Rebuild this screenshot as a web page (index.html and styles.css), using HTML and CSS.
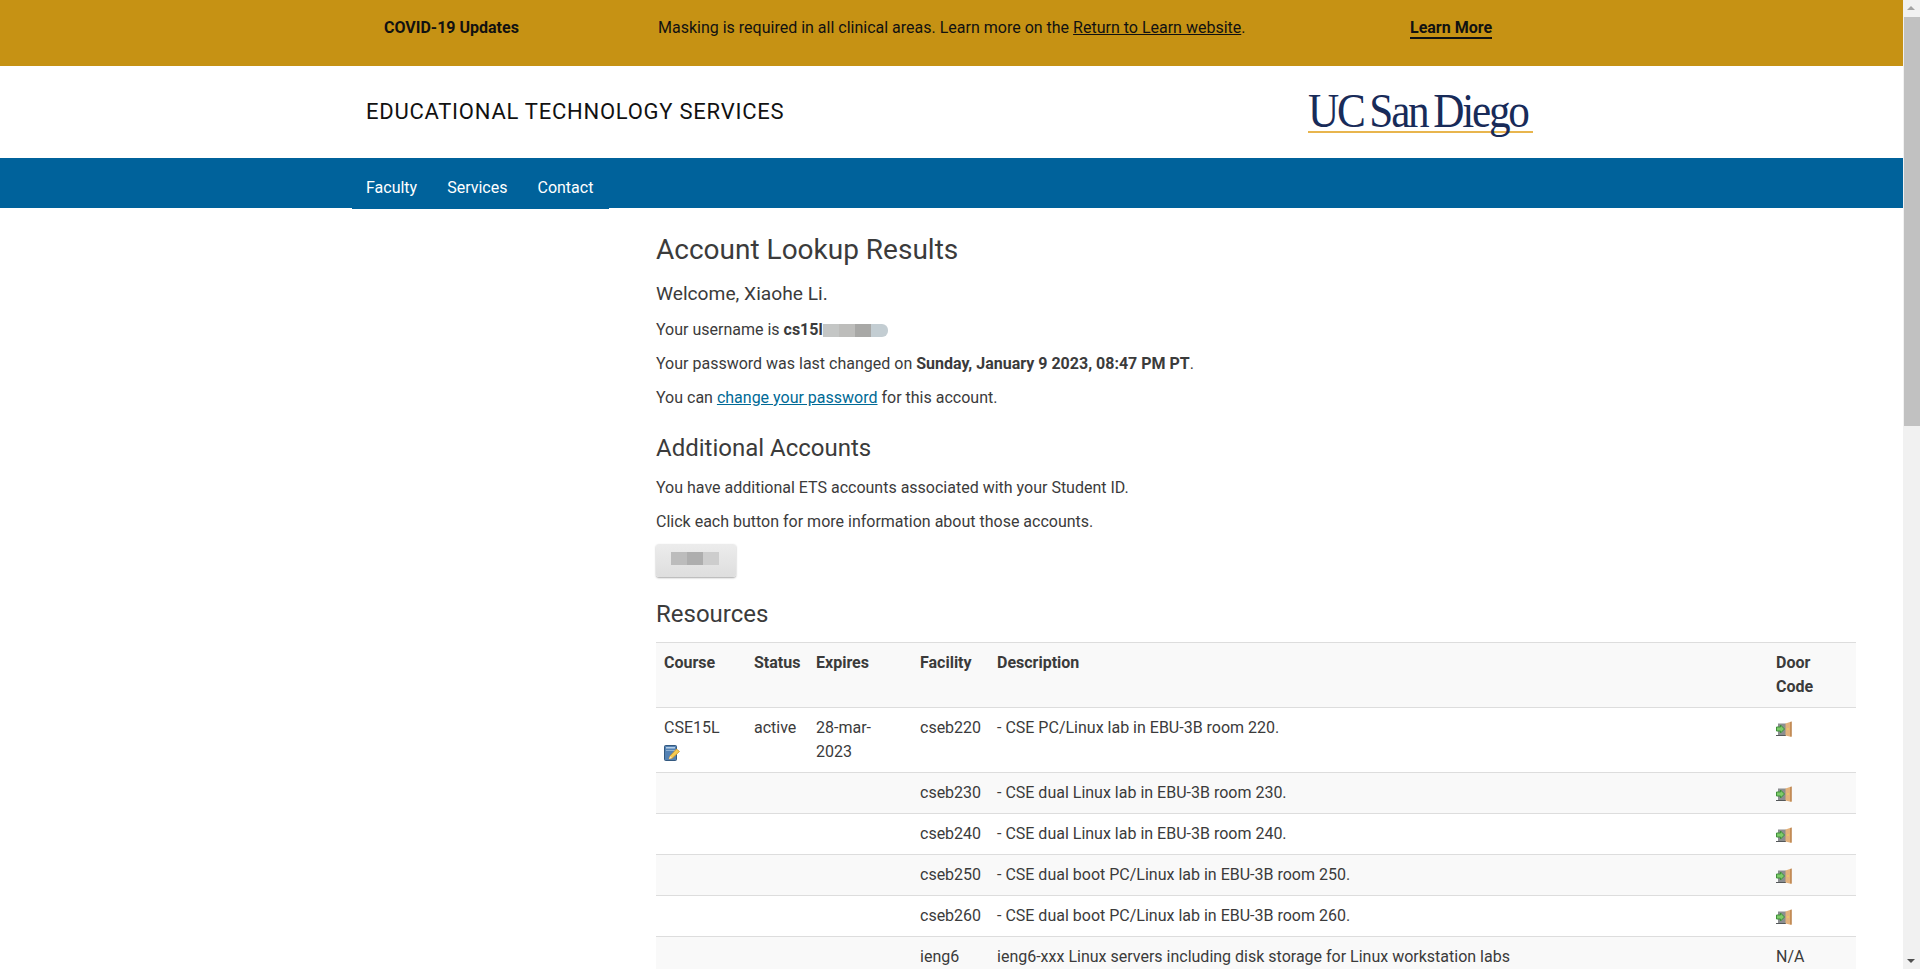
FILE: index.html
```html
<!DOCTYPE html>
<html lang="en">
  <head>
    <meta charset="UTF-8" />
    <meta name="viewport" content="width=device-width, initial-scale=1.0" />
    <title>Account Lookup Results</title>
    <link rel="stylesheet" href="styles.css">
  </head>
  <body>
    <svg class="defs" width="0" height="0">
      <symbol id="door" viewBox="0 0 16 16">
        <rect x="2" y="2.500" width="8" height="12" fill="#8b8e90" />
        <rect x="0" y="14" width="10" height="1" fill="#55585a" />
        <path d="M9.500 2.500 15.500 0.500V16L9.500 14.500Z" fill="#e3b27c" />
        <path d="M14.500 1V15.500H15.500V0.500Z" fill="#a5672e" />
        <rect x="11.500" y="7" width="1" height="2" fill="#f2d35a" />
        <path d="M0.500 6H4.500V4L8.500 8 4.500 12V10H0.500Z" fill="#7ccb68" stroke="#3f8f3a" stroke-width="1" />
      </symbol>
      <symbol id="book" viewBox="0 0 16 16">
        <rect x="0.500" y="0.500" width="12" height="15" rx="1" fill="#5482b4" stroke="#34597f" />
        <rect x="2" y="2" width="9" height="1.500" fill="#b5cee6" />
        <rect x="2" y="5" width="9" height="1" fill="#8fb1d3" />
        <path d="M5 14 6.200 10.800 12.500 4 15.500 6.500 8.500 13Z" fill="#f5cb52" stroke="#d0942a" stroke-width="0.800" />
        <path d="M5 14 6.200 11 8 13Z" fill="#f7e7c2" />
      </symbol>
    </svg>

    <div class="page">
      <div class="main">
        <div class="banner">
          <strong>COVID-19 Updates</strong>
          <span>Masking is required in all clinical areas. Learn more on the <a href="#">Return to Learn website</a>.</span>
          <a class="learn-more" href="#">Learn More</a>
        </div>

        <div class="site-header">
          <div class="site-title">EDUCATIONAL TECHNOLOGY SERVICES</div>
          <div class="logo"><span class="logo-text">UC San Diego</span></div>
        </div>

        <div class="nav">
          <ul class="nav-list">
            <li><a href="#">Faculty</a></li>
            <li><a href="#">Services</a></li>
            <li><a href="#">Contact</a></li>
          </ul>
        </div>

        <div class="content">
          <h1>Account Lookup Results</h1>
          <p class="welcome">Welcome, Xiaohe Li.</p>
          <p>Your username is <strong>cs15l</strong><span class="blur-name"><i></i><i></i><i></i><i></i></span></p>
          <p>Your password was last changed on <strong>Sunday, January 9 2023, 08:47 PM PT</strong>.</p>
          <p>You can <a href="#">change your password</a> for this account.</p>

          <h3 class="first-sub">Additional Accounts</h3>
          <p>You have additional ETS accounts associated with your Student ID.</p>
          <p>Click each button for more information about those accounts.</p>
          <button type="button" class="account-btn"><span class="blur-btn"><i></i><i></i><i></i></span></button>

          <h3>Resources</h3>
          <table class="resources">
            <colgroup>
              <col class="c-course" />
              <col class="c-status" />
              <col class="c-expires" />
              <col class="c-facility" />
              <col />
              <col class="c-door" />
            </colgroup>
            <thead>
              <tr>
                <th>Course</th>
                <th>Status</th>
                <th>Expires</th>
                <th>Facility</th>
                <th>Description</th>
                <th>Door Code</th>
              </tr>
            </thead>
            <tbody>
              <tr>
                <td>CSE15L<br /><svg class="icon"><use href="#book" /></svg></td>
                <td>active</td>
                <td>28-mar-2023</td>
                <td>cseb220</td>
                <td>- CSE PC/Linux lab in EBU-3B room 220.</td>
                <td><svg class="icon"><use href="#door" /></svg></td>
              </tr>
              <tr>
                <td></td><td></td><td></td>
                <td>cseb230</td>
                <td>- CSE dual Linux lab in EBU-3B room 230.</td>
                <td><svg class="icon"><use href="#door" /></svg></td>
              </tr>
              <tr>
                <td></td><td></td><td></td>
                <td>cseb240</td>
                <td>- CSE dual Linux lab in EBU-3B room 240.</td>
                <td><svg class="icon"><use href="#door" /></svg></td>
              </tr>
              <tr>
                <td></td><td></td><td></td>
                <td>cseb250</td>
                <td>- CSE dual boot PC/Linux lab in EBU-3B room 250.</td>
                <td><svg class="icon"><use href="#door" /></svg></td>
              </tr>
              <tr>
                <td></td><td></td><td></td>
                <td>cseb260</td>
                <td>- CSE dual boot PC/Linux lab in EBU-3B room 260.</td>
                <td><svg class="icon"><use href="#door" /></svg></td>
              </tr>
              <tr>
                <td></td><td></td><td></td>
                <td>ieng6</td>
                <td>ieng6-xxx Linux servers including disk storage for Linux workstation labs</td>
                <td>N/A</td>
              </tr>
            </tbody>
          </table>
        </div>
      </div>

      <div class="scrollbar">
        <div class="arrow arrow-up"></div>
        <div class="track"><div class="thumb"></div></div>
        <div class="arrow arrow-down"></div>
      </div>
    </div>
  </body>
</html>
```

FILE: styles.css
```css
html,
body {
  margin: 0;
  height: 100%;
  overflow: hidden;
}
body {
  font-family: Roboto, "Liberation Sans", sans-serif;
  font-size: 16px;
  line-height: 24px;
  color: #3b3b3b;
  background: #fff;
}
.defs {
  display: block;
  height: 0;
}
.page {
  display: flex;
  height: 969px;
}
.main {
  flex: 1;
  min-width: 0;
  overflow: hidden;
}

.banner {
  display: grid;
  grid-template-columns: 274px 752px auto;
  height: 66px;
  padding: 16px 0 0 384px;
  box-sizing: border-box;
  background: #c69214;
  color: #111;
}
.banner a {
  color: #111;
}
.banner .learn-more {
  justify-self: start;
  font-weight: 700;
  line-height: 20px;
  margin-top: 2px;
  height: 19px;
  text-decoration: none;
  border-bottom: 2px solid #111;
}
.banner strong {
  font-weight: 700;
}

.site-header {
  display: flex;
  align-items: center;
  height: 92px;
  padding-left: 366px;
  background: #fff;
}
.site-title {
  width: 942px;
  font-size: 22px;
  letter-spacing: 0.75px;
  color: #111;
}
.logo {
  width: 225px;
  height: 43px;
  margin-bottom: 4px;
  border-bottom: 2px solid #e8b54d;
  white-space: nowrap;
}
.logo-text {
  display: inline-block;
  font-family: "Liberation Serif", serif;
  font-size: 48px;
  line-height: 45px;
  letter-spacing: -2.5px;
  word-spacing: -3px;
  color: #182b59;
  transform: scaleX(0.9);
  transform-origin: left top;
}

.nav {
  height: 50px;
  background: #00629b;
}
.nav-list {
  display: flex;
  gap: 30px;
  width: 257px;
  height: 51px;
  box-sizing: border-box;
  margin: 0 0 0 352px;
  padding: 18px 0 0 14px;
  list-style: none;
  border-bottom: 2px solid #00629b;
}
.nav-list a {
  color: #fff;
  text-decoration: none;
}

.content {
  width: 1200px;
  margin-left: 656px;
  padding-top: 27px;
}
h1 {
  margin: 0 0 18px;
  font-size: 28px;
  font-weight: 400;
  line-height: 29px;
}
h3 {
  margin: 24px 0 15px;
  font-size: 24px;
  font-weight: 400;
  line-height: 26px;
}
h3.first-sub {
  margin-top: 25px;
}
p {
  margin: 0 0 10px;
}
p.welcome {
  margin-bottom: 12px;
  font-size: 19.2px;
}
a {
  color: #006a96;
}
strong {
  font-weight: 700;
}

.blur-name {
  display: inline-flex;
  vertical-align: -2px;
  height: 13px;
  width: 65px;
  border-radius: 0 6px 6px 0;
  overflow: hidden;
}
.blur-name i {
  flex: 1;
}
.blur-name i:nth-child(1) { background: #c4c6c5; }
.blur-name i:nth-child(2) { background: #bdbdbb; }
.blur-name i:nth-child(3) { background: #a8a8a6; }
.blur-name i:nth-child(4) { background: #c3cdd2; }

.account-btn {
  display: block;
  width: 80px;
  height: 33px;
  padding: 0;
  border: none;
  border-radius: 3px;
  background: linear-gradient(#ececec, #dedede);
  box-shadow: 0 1px 2px rgba(0, 0, 0, 0.35);
}
.blur-btn {
  display: flex;
  width: 48px;
  height: 13px;
  margin: -4px auto 0 15px;
}
.blur-btn i {
  flex: 1;
  background: #bcbcbc;
}
.blur-btn i:nth-child(2) { background: #aeaeae; }
.blur-btn i:nth-child(3) { background: #cdcdcd; }

.resources {
  width: 100%;
  border-collapse: collapse;
  table-layout: fixed;
}
.c-course { width: 90px; }
.c-status { width: 62px; }
.c-expires { width: 104px; }
.c-facility { width: 77px; }
.c-door { width: 88px; }
.resources th,
.resources td {
  padding: 8px;
  text-align: left;
  vertical-align: top;
  border-top: 1px solid #ddd;
}
.resources th {
  font-weight: 700;
}
.resources thead tr,
.resources tbody tr:nth-child(even) {
  background: #f9f9f9;
}
.icon {
  display: inline-block;
  width: 16px;
  height: 16px;
  vertical-align: -4px;
}

.scrollbar {
  display: flex;
  flex-direction: column;
  width: 17px;
  background: #f1f1f1;
}
.arrow {
  height: 17px;
  position: relative;
}
.arrow::after {
  content: "";
  position: absolute;
  left: 4px;
  border-left: 4px solid transparent;
  border-right: 4px solid transparent;
}
.arrow-up::after {
  top: 6px;
  border-bottom: 4px solid #a3a3a3;
}
.arrow-down::after {
  top: 7px;
  border-top: 4px solid #505050;
}
.track {
  flex: 1;
}
.thumb {
  height: 409px;
  margin-left: 1px;
  background: #c1c1c1;
}
```
